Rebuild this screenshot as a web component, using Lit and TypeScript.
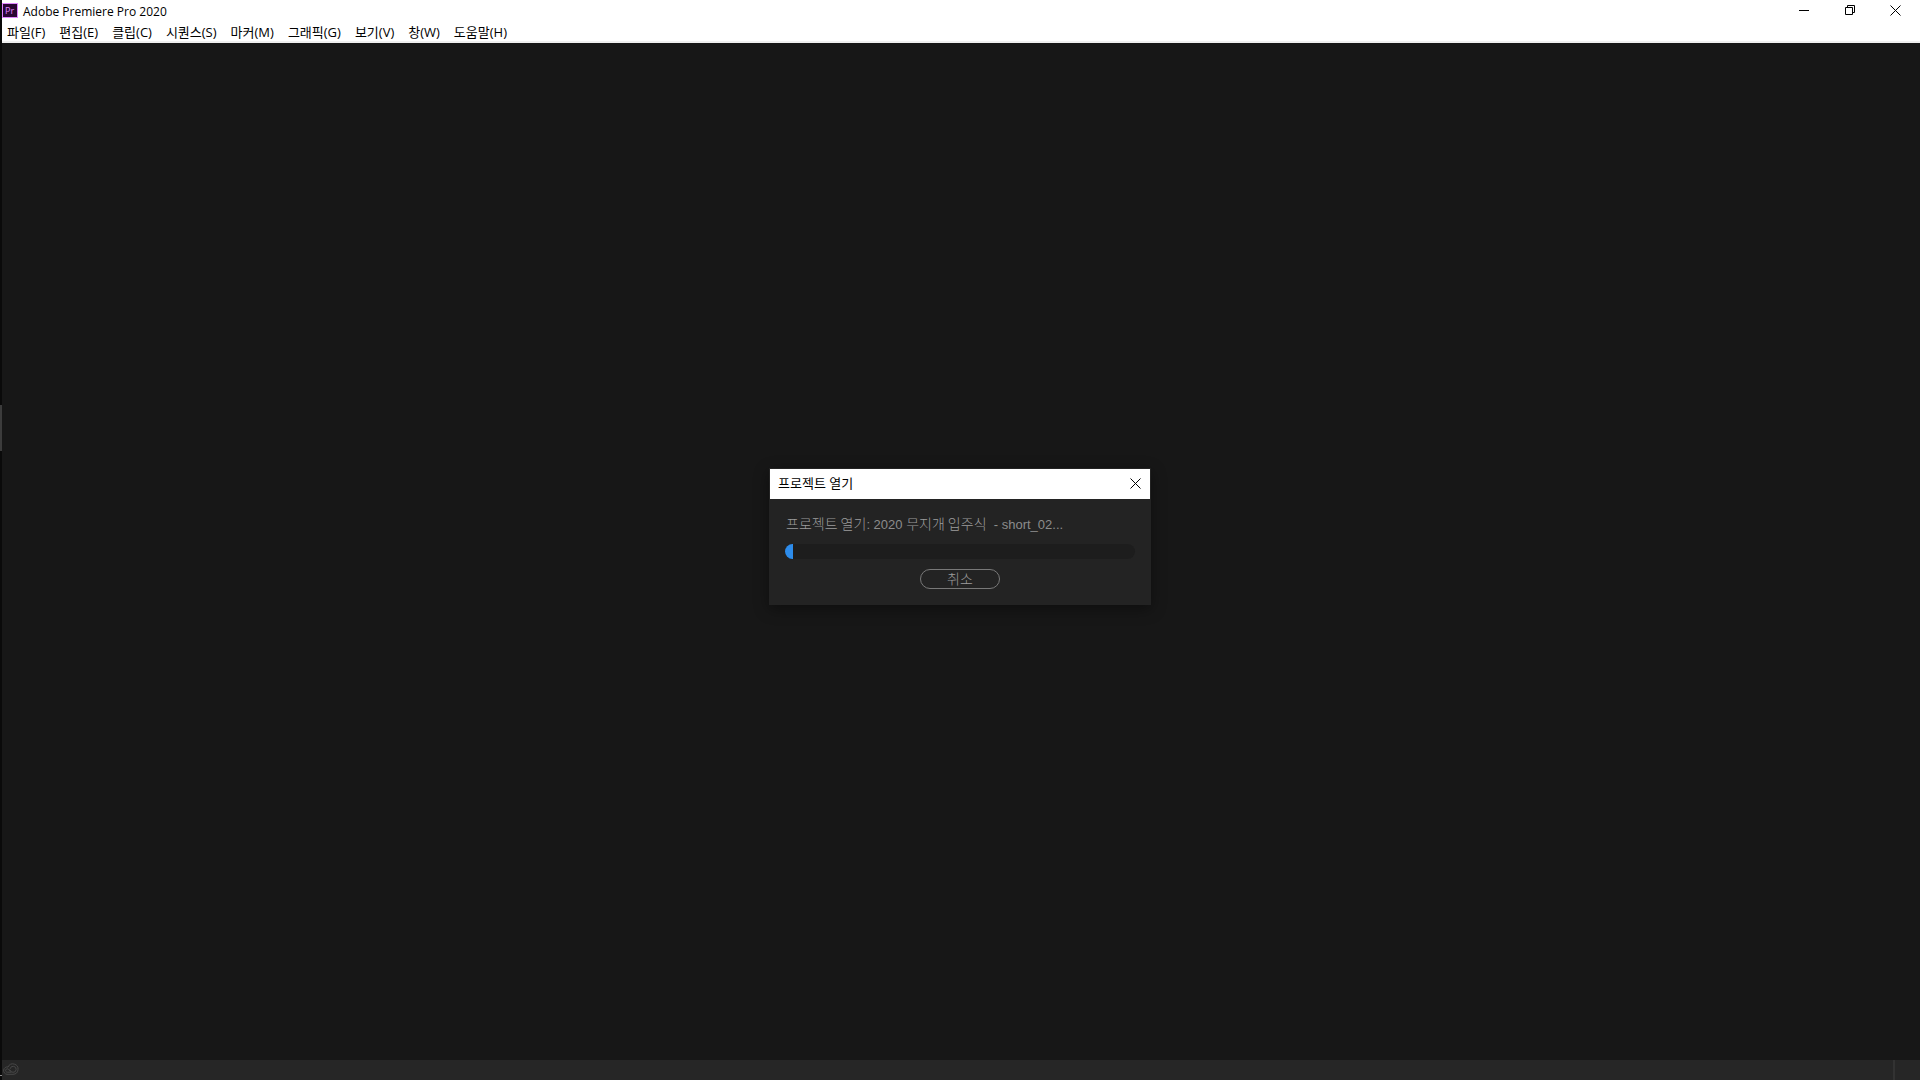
import { LitElement, html, css, svg } from "lit";
import { customElement, property } from "lit/decorators.js";

const closeGlyph = svg`<path d="M.5 .5l10 10M10.5 .5l-10 10" fill="none" stroke="currentColor" stroke-width="1" />`;

/** Splits a message so that Hangul runs can be set a size larger than Latin ones. */
const runs = (text: string) => text.split(/([가-힣]+(?: [가-힣]+)*)/);

@customElement("project-dialog")
export class ProjectDialog extends LitElement {
  @property() heading = "";
  @property() message = "";
  @property({ type: Number }) progress = 0;

  static styles = css`
    :host {
      display: block;
      width: 380px;
      border: 1px solid #232323;
      background: #232323;
      box-shadow: 0 4px 14px rgba(0, 0, 0, 0.4);
    }
    .head {
      display: flex;
      align-items: center;
      justify-content: space-between;
      height: 30px;
      padding: 0 9px 0 8px;
      background: #fff;
      color: #000;
    }
    .heading {
      margin: 0;
      padding-bottom: 2px;
      font-size: 13px;
      font-weight: 400;
      line-height: 16px;
    }
    .close {
      display: flex;
      padding: 0 0 1px;
      border: 0;
      background: none;
      color: #000;
    }
    .body {
      display: flex;
      flex-direction: column;
      padding: 16px 15px 15px;
      color: #8c8c8c;
    }
    .message {
      height: 18px;
      margin: 0 0 11px;
      padding-left: 1px;
      font: 13px/18px "Liberation Sans", "Noto Sans CJK KR", sans-serif;
      white-space: pre;
    }
    .hangul {
      color: #9c9c9c;
      font: 300 14px/16px "Noto Sans CJK KR", sans-serif;
    }
    .track {
      height: 15px;
      border-radius: 8px;
      background: #1d1d1d;
      overflow: hidden;
    }
    .fill {
      height: 100%;
      background: #2d8ceb;
    }
    .cancel {
      align-self: center;
      width: 80px;
      height: 20px;
      margin-top: 10px;
      padding: 0 0 2px;
      border: 1px solid #787878;
      border-radius: 10px;
      background: none;
      color: #9c9c9c;
      font: 300 14px/16px "Noto Sans CJK KR", sans-serif;
    }
  `;

  render() {
    return html`
      <header class="head">
        <h1 class="heading">${this.heading}</h1>
        <button class="close" aria-label="닫기">
          <svg width="11" height="11" viewBox="0 0 11 11">${closeGlyph}</svg>
        </button>
      </header>
      <div class="body">
        <p class="message">${runs(this.message).map((r, i) => (i % 2 ? html`<span class="hangul">${r}</span>` : r))}</p>
        <div class="track" role="progressbar" aria-label=${this.heading} aria-valuenow=${this.progress}>
          <div class="fill" style="width:${this.progress}%"></div>
        </div>
        <button class="cancel">취소</button>
      </div>
    `;
  }
}

@customElement("app-root")
export class AppRoot extends LitElement {
  private menus = ["파일(F)", "편집(E)", "클립(C)", "시퀀스(S)", "마커(M)", "그래픽(G)", "보기(V)", "창(W)", "도움말(H)"];

  static styles = css`
    :host {
      display: flex;
      height: 100vh;
      background: #171717;
      color: #000;
      font: 12px/16px "Open Sans", "Noto Sans CJK KR", sans-serif;
    }
    .edge {
      display: flex;
      flex-direction: column;
      flex: none;
      width: 2px;
      background: #0a0a0a;
    }
    .edge::before {
      content: "";
      flex: 405;
    }
    .edge::after {
      content: "";
      flex: 624;
      margin-bottom: 4px;
      border-bottom: 1px solid #8c8c8c;
    }
    .grip {
      flex: 46;
      background: #3c3c3c;
    }
    .window {
      display: flex;
      flex-direction: column;
      flex: 1;
      min-width: 0;
    }
    .title {
      display: flex;
      align-items: center;
      height: 22px;
      padding-right: 2px;
      background: #fff;
    }
    .logo {
      flex: none;
      margin-right: 5px;
    }
    .name {
      flex: 1;
      padding-top: 2px;
    }
    .controls {
      display: flex;
    }
    .control {
      display: flex;
      align-items: center;
      justify-content: center;
      width: 46px;
      height: 20px;
      margin-bottom: 2px;
      padding: 0;
      border: 0;
      background: none;
      color: #000;
    }
    .controls .control:last-child {
      width: 45px;
    }
    .menu {
      display: flex;
      align-items: center;
      gap: 14px;
      height: 19px;
      padding-left: 5px;
      border-bottom: 2px solid #f0f0f0;
      background: #fff;
    }
    .item {
      padding: 0;
      border: 0;
      background: none;
      color: #000;
      font: inherit;
      font-size: 13px;
      white-space: nowrap;
    }
    .stage {
      display: flex;
      flex: 1;
      align-items: center;
      justify-content: center;
      padding: 0 2px 31px 0;
    }
    .status {
      display: flex;
      align-items: center;
      justify-content: space-between;
      height: 20px;
      background: #262626;
    }
    .cloud {
      margin-bottom: 2px;
      color: #484848;
    }
    .divider {
      width: 2px;
      height: 100%;
      margin-right: 25px;
      background: #323232;
    }
  `;

  render() {
    return html`
      <div class="edge"><div class="grip"></div></div>
      <div class="window">
        <header class="title">
          <svg class="logo" width="16" height="16" viewBox="0 0 16 16">
            <rect x=".5" y=".5" width="15" height="14" fill="#2a0634" stroke="#e085ff" />
            <text x="3" y="11" font-family="Open Sans" font-size="9" fill="#e085ff">Pr</text>
          </svg>
          <span class="name">Adobe Premiere Pro 2020</span>
          <div class="controls">
            <button class="control" aria-label="최소화">
              <svg width="10" height="10" viewBox="0 0 10 10"><path d="M0 5.5h10" stroke="currentColor" /></svg>
            </button>
            <button class="control" aria-label="이전 크기로 복원">
              <svg width="10" height="10" viewBox="0 0 10 10">
                <path d="M.5 2.5h7v7h-7zM2.5 2.5v-2h7v7h-2" fill="none" stroke="currentColor" />
              </svg>
            </button>
            <button class="control" aria-label="닫기">
              <svg width="11" height="11" viewBox="0 0 11 11">${closeGlyph}</svg>
            </button>
          </div>
        </header>
        <nav class="menu">${this.menus.map((m) => html`<button class="item">${m}</button>`)}</nav>
        <main class="stage">
          <project-dialog
            heading="프로젝트 열기"
            message="프로젝트 열기: 2020 무지개 입주식  - short_02..."
            progress="2.3"
          ></project-dialog>
        </main>
        <footer class="status">
          <svg class="cloud" width="17" height="12" viewBox="0 0 17 12" fill="none" stroke="currentColor">
            <path d="M5 11.3h6a5.200 5.200 0 1 0-4.900-7.300a3.700 3.700 0 1 0-1.100 7.300z" />
            <path d="M9.500 9.200h-4.200a1.700 1.700 0 1 1 1.200-2.900l2.400 2.400M8.200 5.800a3 3 0 1 1 2.800 3.500c-1 0-1.700-.6-2.400-1.400l-1.500-1.500" />
          </svg>
          <span class="divider"></span>
        </footer>
      </div>
    `;
  }
}
